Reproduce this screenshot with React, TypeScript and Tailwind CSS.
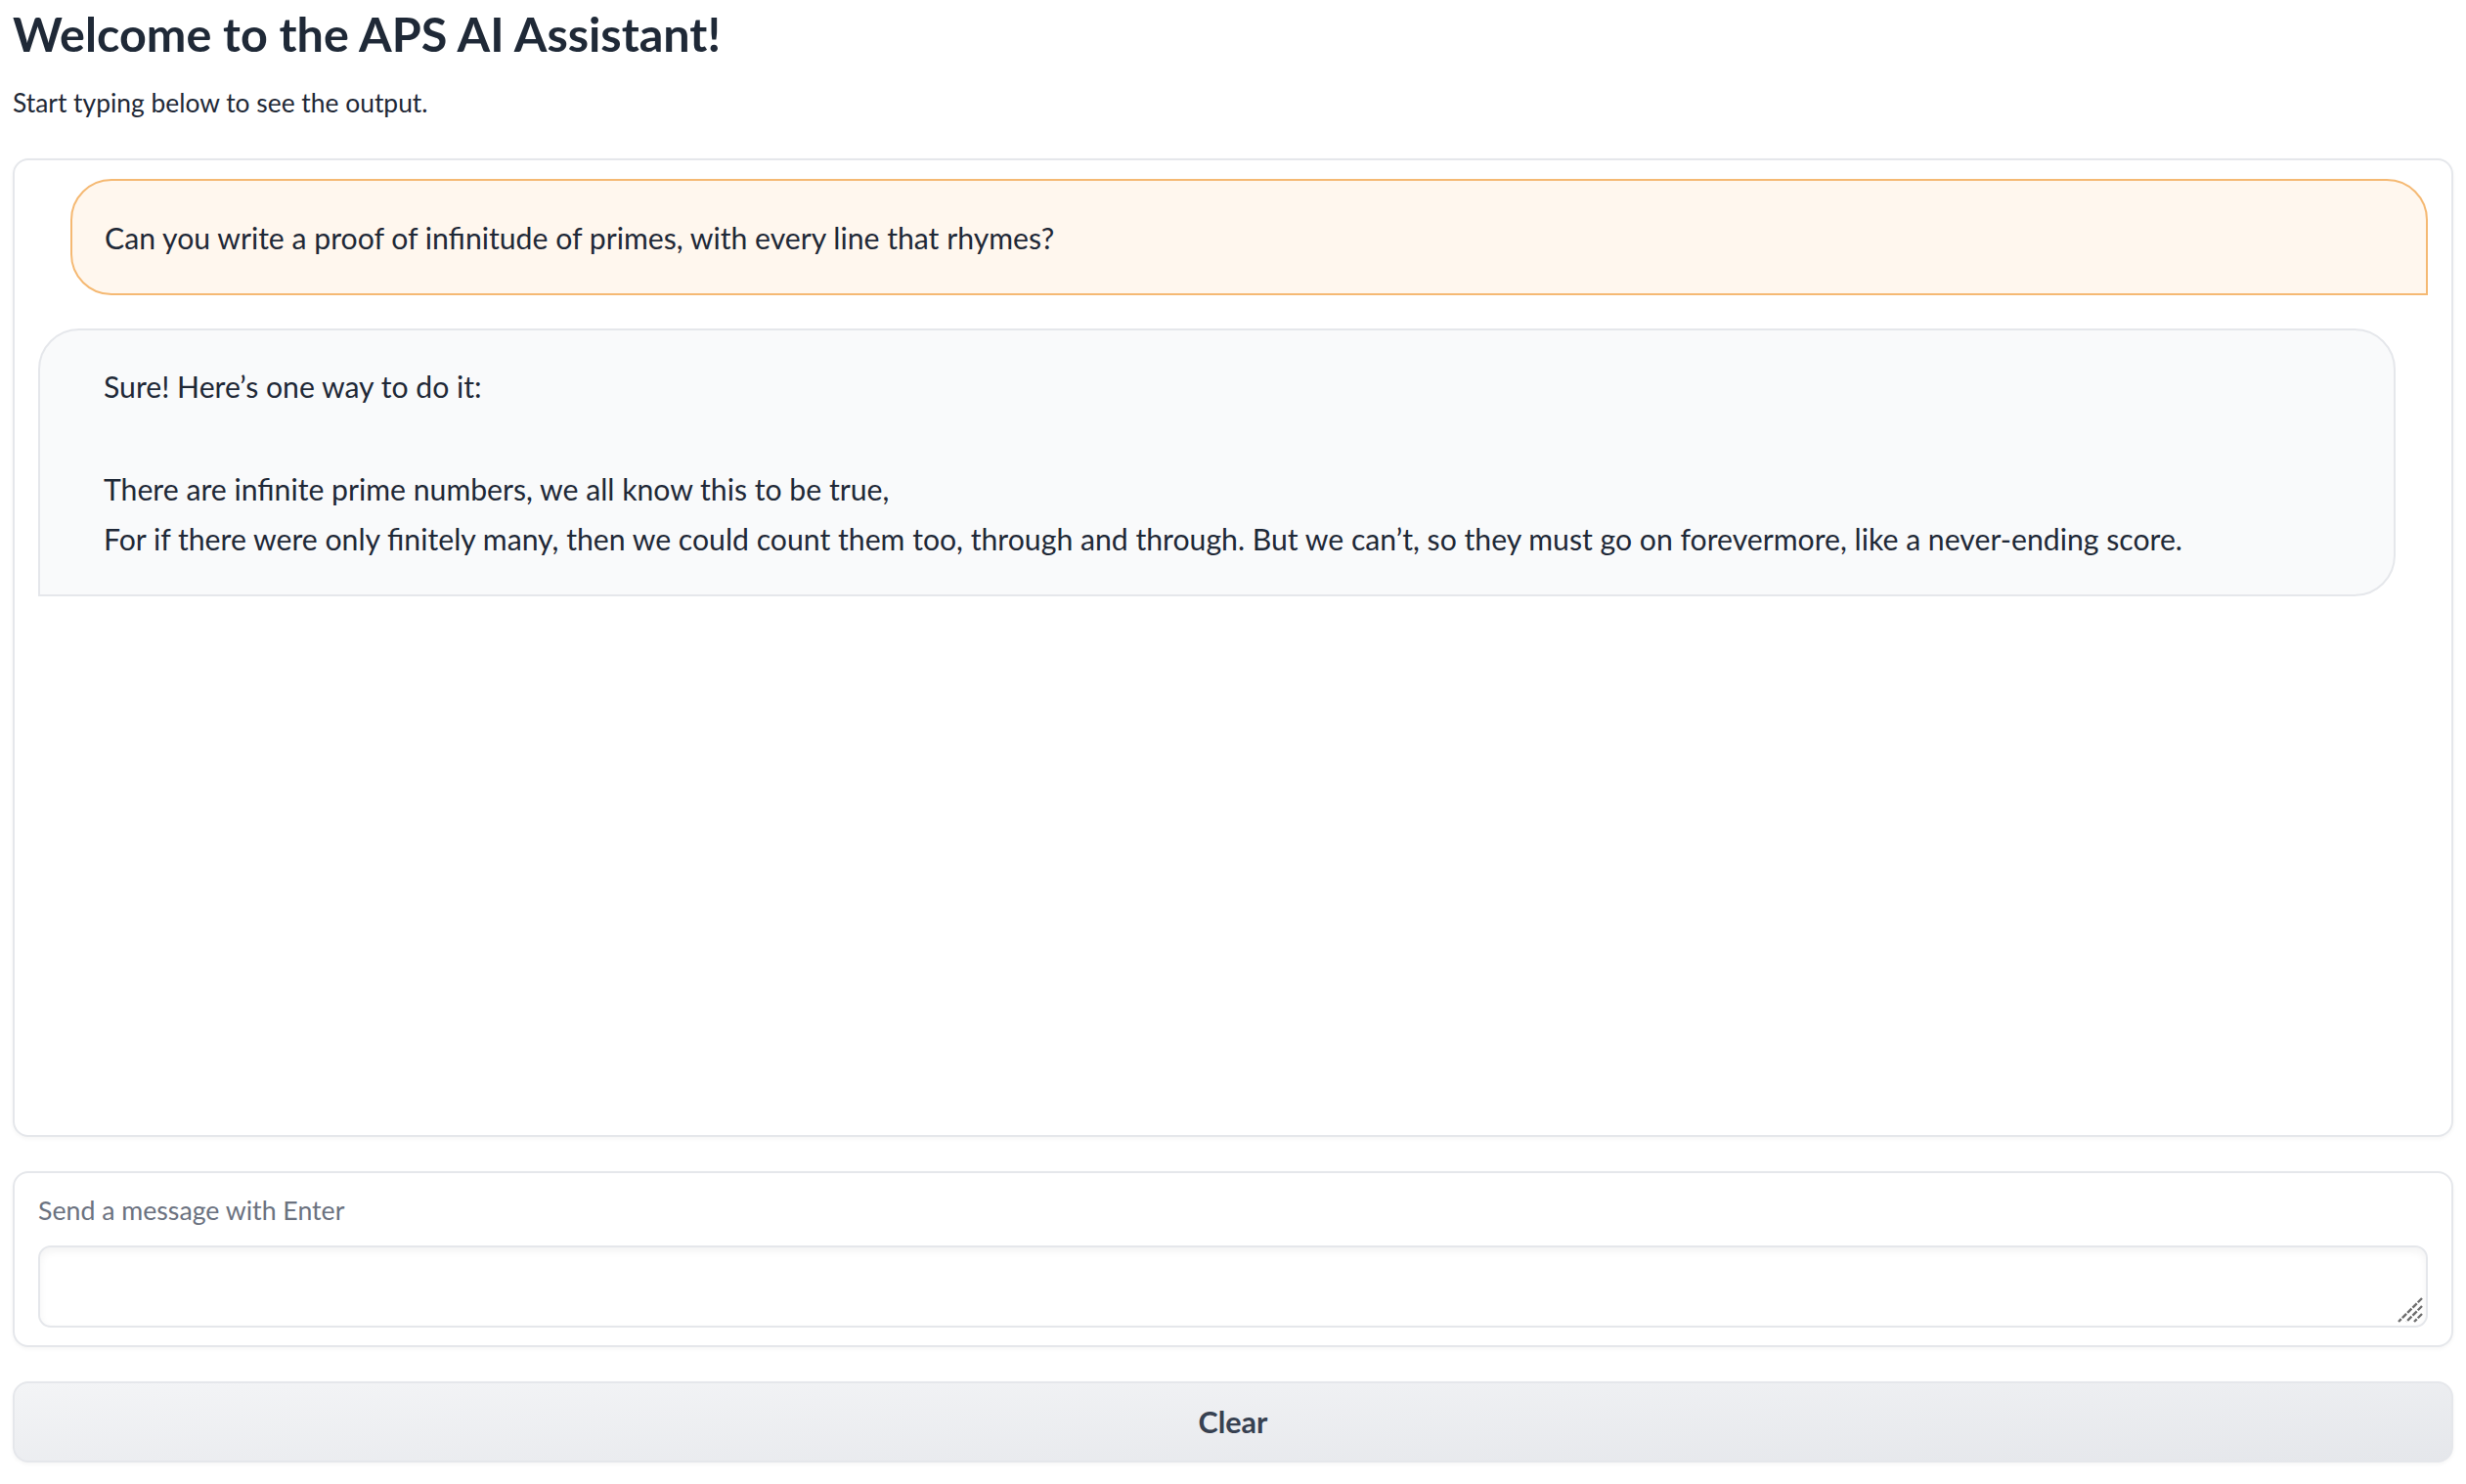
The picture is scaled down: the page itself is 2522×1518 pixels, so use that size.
import React from "react";

function ResizeHandle() {
  return (
    <svg
      className="pointer-events-none absolute bottom-[5px] right-[5px]"
      width="26"
      height="26"
      viewBox="0 0 26 26"
      fill="none"
    >
      <path d="M25 1 L1 25" stroke="#6e6e6e" strokeWidth="2.4" strokeDasharray="6 1.5" />
      <path d="M25 9 L9 25" stroke="#6e6e6e" strokeWidth="2.4" strokeDasharray="6 1.5" />
      <path d="M25 17 L17 25" stroke="#6e6e6e" strokeWidth="2.4" strokeDasharray="6 1.5" />
    </svg>
  );
}

export default function App() {
  return (
    <div className="min-h-screen bg-white px-[13px] pb-[20px] font-['Lato',_'Liberation_Sans',_sans-serif] text-[#1f2937]">
      <h1 className="pt-[5px] text-[48.5px] font-bold leading-[58px] text-[#1f2937]">
        Welcome to the APS AI Assistant!
      </h1>
      <p className="mt-[22px] text-[26.4px] leading-[40px] text-[#1f2937]">
        Start typing below to see the output.
      </p>

      <div className="mt-[37px] flex h-[1001px] flex-col rounded-[16px] border-2 border-[#e5e7eb] bg-white px-[24px] pt-[19px] shadow-[0_2px_4px_rgba(0,0,0,0.04)]">
        <div className="ml-[33px] rounded-[42px] rounded-br-none border-2 border-[#f5b973] bg-[#fff7ee] pb-[31px] pl-[33px] pr-[33px] pt-[33px] text-[30.2px] leading-[51px] text-[#1f2937]">
          Can you write a proof of infinitude of primes, with every line that rhymes?
        </div>
        <div className="mr-[33px] mt-[34px] rounded-[42px] rounded-bl-none border-2 border-[#e5e7eb] bg-[#f9fafb] pb-[31px] pl-[65px] pr-[40px] pt-[32px] text-[30.2px] leading-[51px] text-[#1f2937]">
          <p className="mb-[54px]">Sure! Here’s one way to do it:</p>
          <p>There are infinite prime numbers, we all know this to be true,</p>
          <p>
            For if there were only finitely many, then we could count them too, through and through. But we can’t, so
            they must go on forevermore, like a never-ending score.
          </p>
        </div>
      </div>

      <div className="mt-[35px] flex flex-col rounded-[16px] border-2 border-[#e5e7eb] bg-white px-[24px] pb-[18px] pt-[20px] shadow-[0_2px_4px_rgba(0,0,0,0.04)]">
        <label className="text-[26.7px] leading-[36px] text-[#6b7280]">Send a message with Enter</label>
        <div className="relative mt-[18px]">
          <textarea
            className="block h-[84px] w-full resize-none rounded-[13px] border-2 border-[#e5e7eb] bg-white px-[20px] py-[16px] text-[30px] text-[#1f2937] shadow-[inset_0_4px_8px_rgba(0,0,0,0.05)] outline-none"
            rows={1}
          />
          <ResizeHandle />
        </div>
      </div>

      <button className="mt-[35px] flex h-[83px] w-full items-center justify-center rounded-[16px] border-2 border-[#e5e7eb] bg-gradient-to-br from-[#f3f4f6] to-[#e5e7eb] text-[30.5px] font-bold text-[#374151] shadow-[0_2px_4px_rgba(0,0,0,0.04)]">
        Clear
      </button>
    </div>
  );
}
